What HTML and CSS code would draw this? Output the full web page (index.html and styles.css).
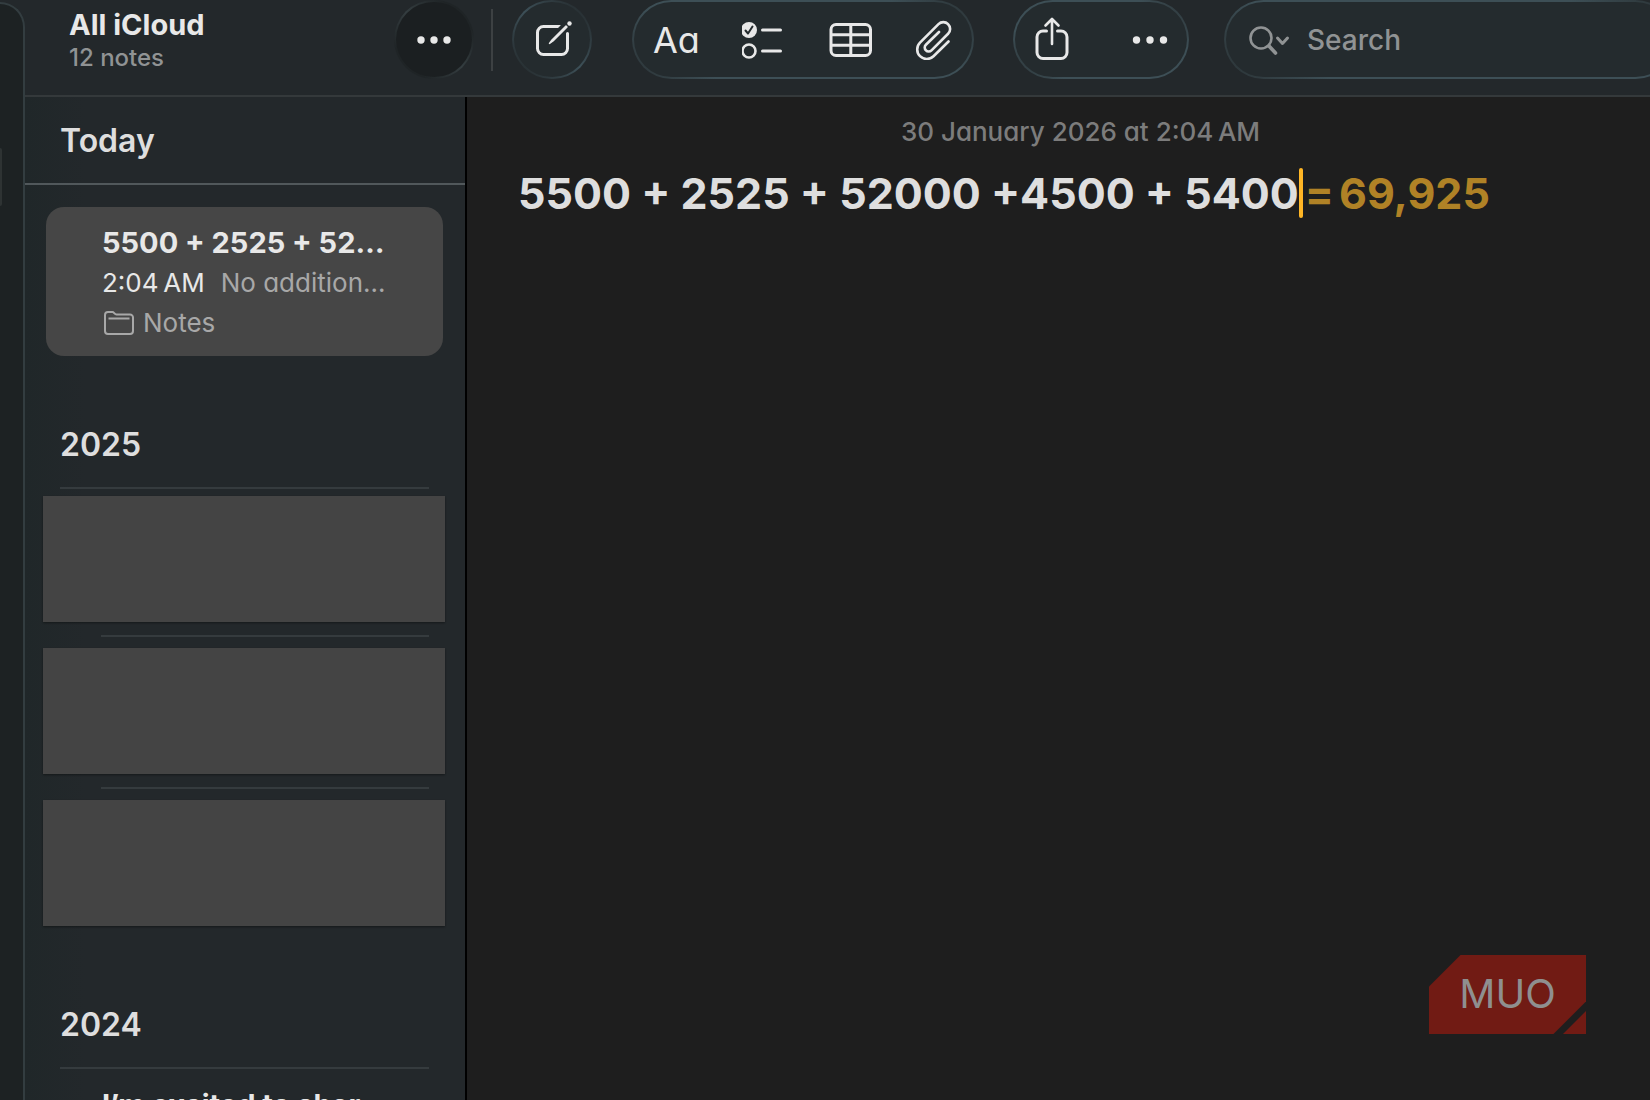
FILE: index.html
```
<!DOCTYPE html>
<html lang="en">
  <head>
    <meta charset="UTF-8" />
    <meta name="viewport" content="width=device-width, initial-scale=1.0" />
    <title>Notes</title>
    <link rel="stylesheet" href="styles.css" />
  </head>
  <body>
    <div class="app">
      <aside class="rail"><div class="rail-item"></div></aside>
      <div class="window">
        <header class="toolbar">
          <div class="folder">
            <div class="folder-name">All iCloud</div>
            <div class="folder-count">12 notes</div>
          </div>
          <button class="round round-dark" aria-label="Folder options">
            <svg width="36" height="36" viewBox="0 0 36 36" fill="currentColor">
              <circle cx="5" cy="18" r="3.7" /><circle cx="18" cy="18" r="3.7" /><circle cx="31" cy="18" r="3.7" />
            </svg>
          </button>
          <div class="separator"></div>
          <button class="round" aria-label="New note">
            <svg width="40" height="40" viewBox="-1 0 40 40" fill="none" stroke="currentColor" stroke-width="3" stroke-linecap="round" stroke-linejoin="round">
              <path d="M27 6.5H10.5a6 6 0 0 0-6 6v16a6 6 0 0 0 6 6h18a6 6 0 0 0 6-6V13.5" />
              <path d="M17.5 20.5 33 5" stroke-width="7" stroke="#242b2e" />
              <path d="M33 6 19 20l-2.5 3.5 3.5-2.5L34 7z" fill="currentColor" stroke-width="1.5" />
              <circle cx="36.5" cy="3.5" r="2.2" fill="currentColor" stroke="none" />
            </svg>
          </button>
          <div class="pill format">
            <button class="type" aria-label="Text style">Aa</button>
            <button aria-label="Checklist">
              <svg width="44" height="40" viewBox="1 0 44 40" fill="none" stroke="currentColor" stroke-width="3" stroke-linecap="round" stroke-linejoin="round">
                <circle cx="8" cy="10" r="8" fill="currentColor" stroke="none" />
                <path d="m4.5 10.5 2.5 3 4.5-7" stroke="#242b2e" stroke-width="2" />
                <circle cx="8" cy="31" r="6.5" stroke-width="2.6" />
                <path d="M21.5 10h18M21.5 31h18" />
              </svg>
            </button>
            <button aria-label="Table">
              <svg width="44" height="40" viewBox="-1 0 44 40" fill="none" stroke="currentColor" stroke-width="3">
                <rect x="2" y="4.5" width="39.5" height="31" rx="5" />
                <path d="M2 14.8h39.5M2 25.2h39.5M21.8 4.5v31" />
              </svg>
            </button>
            <button aria-label="Attach">
              <svg width="40" height="40" viewBox="0 0 40 40" fill="none" stroke="currentColor" stroke-width="2.6" stroke-linecap="round" stroke-linejoin="round">
                <path d="M34.5 21.5 19.5 36.2a9.6 9.6 0 0 1-13.5 0a9.6 9.6 0 0 1 0-13.5L24.5 4.2a6.7 6.7 0 0 1 9.6 0a6.7 6.7 0 0 1 0 9.6L17.5 30.3a3.9 3.9 0 0 1-5.6 0a3.9 3.9 0 0 1 0-5.6L25 12" />
              </svg>
            </button>
          </div>
          <div class="pill share">
            <button aria-label="Share">
              <svg width="40" height="46" viewBox="0 1 40 46" fill="none" stroke="currentColor" stroke-width="3" stroke-linecap="round" stroke-linejoin="round">
                <path d="M14.5 15H11a6 6 0 0 0-6 6v15.5a6 6 0 0 0 6 6h18a6 6 0 0 0 6-6V21a6 6 0 0 0-6-6h-3.5" />
                <path d="M20 28V4M13.5 9.5 20 3l6.5 6.5" stroke-width="2.6" />
              </svg>
            </button>
            <button aria-label="More">
              <svg width="36" height="36" viewBox="0 0 36 36" fill="currentColor">
                <circle cx="4.5" cy="18" r="3.7" /><circle cx="18" cy="18" r="3.7" /><circle cx="31.5" cy="18" r="3.7" />
              </svg>
            </button>
          </div>
          <label class="pill search">
            <svg width="42" height="40" viewBox="0 0 42 40" fill="none" stroke="currentColor" stroke-width="2.6" stroke-linecap="round" stroke-linejoin="round">
              <circle cx="13" cy="18" r="10.5" />
              <path d="m21 26 6.5 7" stroke-width="3.6" />
              <path d="m29.5 18 5 5.5 5-5.5" stroke-width="3" />
            </svg>
            <input type="text" placeholder="Search" aria-label="Search" />
          </label>
        </header>

        <div class="content">
          <section class="list">
            <h2 class="group group-pinned">Today</h2>
            <a class="note selected" href="#">
              <span class="note-title">5500 + 2525 + 52000 +4500 + 5400</span>
              <span class="note-line"><span class="note-time">2:04&#8239;AM</span><span class="note-preview">No additional text</span></span>
              <span class="note-folder">
                <svg width="32" height="26" viewBox="0 0 32 26" fill="none" stroke="currentColor" stroke-width="2" stroke-linejoin="round">
                  <path d="M3 5a3 3 0 0 1 3-3h4.5c1.5 0 2 2.5 4 2.5H28a3 3 0 0 1 3 3V21a3 3 0 0 1-3 3H6a3 3 0 0 1-3-3z" />
                  <path d="M6.5 8.5h21" />
                </svg>
                Notes
              </span>
            </a>

            <h2 class="group">2025</h2>
            <ul class="notes">
              <li class="redacted"></li>
              <li class="redacted"></li>
              <li class="redacted"></li>
            </ul>

            <h2 class="group">2024</h2>
            <a class="note" href="#"><span class="note-title">I’m excited to share this</span></a>
          </section>

          <main class="editor">
            <time class="date">30 January 2026 at 2:04&#8239;AM</time>
            <h1 class="sum">5500 + 2525 + 52000 +4500 + 5400<span class="caret"></span><span class="result"><span>=</span><span>69,925</span></span></h1>
          </main>
        </div>
      </div>
    </div>

    <div class="watermark">
      <svg width="157" height="79" viewBox="0 0 157 79">
        <path d="M31.5 0H157v46.5L124.5 79H0V31.5z" fill="#711b14" />
        <path d="M157 56v23h-23z" fill="#711b14" />
      </svg>
      <span class="watermark-name">MUO</span>
    </div>
  </body>
</html>
```
FILE: styles.css
```
:root {
  --chrome: #23282b;
  --control: #242b2e;
  --page: #1e1e1e;
  --line: #353b3e;
  --text: #dedede;
  --muted: #909394;
  --accent: #b08226;
}

* {
  box-sizing: border-box;
}

body {
  margin: 0;
  height: 100vh;
  overflow: hidden;
  background: var(--chrome);
  color: var(--text);
  font-family: Inter, "Liberation Sans", sans-serif;
}

button {
  padding: 0;
  border: 0;
  background: none;
  color: #e8e8e8;
  font: inherit;
}

svg {
  display: block;
  flex: none;
}

/* the window runs a little past the right side of the screen */
.app {
  display: flex;
  width: calc(100% + 44px);
  height: 100%;
}

.rail {
  flex: none;
  width: 25px;
  margin-top: 2px;
  padding-top: 144px;
  border: solid #333d40;
  border-width: 2px 2px 0 0;
  border-top-right-radius: 36px;
  background: #1d2223;
}
.rail-item {
  width: 2px;
  height: 58px;
  border-radius: 0 4px 4px 0;
  background: #2e3333;
}

.window {
  display: flex;
  flex: 1;
  flex-direction: column;
  min-width: 0;
}

/* toolbar */
.toolbar {
  display: flex;
  flex: none;
  align-items: flex-start;
  height: 97px;
  padding: 0 19px 0 44px;
  border-bottom: 2px solid #34393b;
}
.folder {
  flex: none;
  width: 325px;
  padding-top: 8px;
}
.folder-name {
  color: #e8e8e8;
  font-size: 29px;
  font-weight: 700;
  line-height: 34px;
}
.folder-count {
  color: var(--muted);
  font-size: 24px;
  font-weight: 500;
  line-height: 32px;
}

.round,
.pill {
  display: flex;
  flex: none;
  align-items: center;
  height: 79px;
  border: 2px solid transparent;
  border-radius: 40px;
  background:
    linear-gradient(var(--control), var(--control)) padding-box,
    linear-gradient(45deg, #2a3235, #3d4f56 20%, #3d4f56 80%, #2a3235) border-box;
}
.round {
  justify-content: center;
  width: 80px;
  background:
    linear-gradient(var(--control), var(--control)) padding-box,
    linear-gradient(45deg, #262d30 10%, #3d5058 50%, #262d30 90%) border-box;
}
.round-dark {
  background:
    linear-gradient(#1b1f21, #1b1f21) padding-box,
    linear-gradient(45deg, #1f2426 20%, #343d40 50%, #1f2426 80%) border-box;
}
.separator {
  flex: none;
  width: 2px;
  height: 62px;
  margin: 9px 19px 0 17px;
  background: #3d4143;
}
.format {
  justify-content: space-between;
  width: 342px;
  margin-left: 40px;
  padding: 0 18px 0 19px;
}
.type {
  font-size: 36px;
  line-height: 40px;
  font-feature-settings: "cv11";
}
.share {
  justify-content: space-between;
  width: 176px;
  margin-left: 39px;
  padding: 0 19px 0 17px;
}
.search {
  flex: 1;
  gap: 17px;
  min-width: 0;
  margin-left: 35px;
  padding-left: 22px;
  color: var(--muted);
}
.search input {
  flex: 1;
  min-width: 0;
  padding: 0;
  border: 0;
  outline: 0;
  background: none;
  color: var(--text);
  font: 500 28px Inter, sans-serif;
}
.search input::placeholder {
  color: var(--muted);
  opacity: 1;
}

.content {
  display: flex;
  flex: 1;
  min-height: 0;
}

/* note list */
.list {
  flex: none;
  width: 442px;
  overflow: hidden;
  border-right: 2px solid #000;
  background: linear-gradient(90deg, #202729, var(--chrome) 60px);
}
.group {
  margin: 65px 36px 0 35px;
  padding: 2px 0 20px;
  border-bottom: 2px solid var(--line);
  font-size: 32px;
  font-weight: 600;
  line-height: 44px;
}
.group-pinned {
  margin: 0;
  padding: 22px 35px 20px;
  border-color: #51585b;
}
.note {
  display: block;
  margin: 0 22px 0 21px;
  padding: 17px 52px 14px 56px;
  color: inherit;
  text-decoration: none;
  white-space: nowrap;
}
.selected {
  margin-top: 22px;
  border-radius: 18px;
  background: #464646;
}
.note-title {
  display: block;
  overflow: hidden;
  color: #e8e8e8;
  font-size: 29px;
  font-weight: 700;
  line-height: 38px;
  text-overflow: ellipsis;
}
.note-line {
  display: flex;
  gap: 16px;
  font-size: 26px;
  line-height: 42px;
  font-feature-settings: "cv11";
}
.note-time {
  color: #e8e8e8;
}
.note-preview {
  overflow: hidden;
  color: #a8a8a8;
  text-overflow: ellipsis;
}
.note-folder {
  display: flex;
  align-items: center;
  gap: 9px;
  color: #a8a8a8;
  font-size: 26px;
  line-height: 38px;
}

.notes {
  display: flex;
  flex-direction: column;
  gap: 26px;
  margin: 7px 20px 0 18px;
  padding: 0 0 10px;
  list-style: none;
}
.redacted {
  position: relative;
  height: 126px;
  background: #444;
  box-shadow: 0 1px 2px rgba(0, 0, 0, 0.4);
}
/* divider between two notes, inset to the title */
.redacted + .redacted::before {
  content: "";
  position: absolute;
  top: -13px;
  right: 16px;
  left: 58px;
  height: 2px;
  background: var(--line);
}

/* editor */
.editor {
  flex: 1;
  min-width: 0;
  background: var(--page);
}
.date {
  display: block;
  padding-top: 18px;
  color: #7c7c7c;
  font-size: 26px;
  font-weight: 500;
  line-height: 34px;
  text-align: center;
  font-feature-settings: "cv11";
}
.sum {
  display: flex;
  align-items: center;
  margin: 16px 0 0 51px;
  font-size: 43px;
  font-weight: 700;
  line-height: 56px;
  white-space: nowrap;
}
.caret {
  width: 4px;
  height: 50px;
  border-radius: 2px;
  background: #ffb625;
}
.result {
  display: flex;
  gap: 5px;
  margin-left: 2px;
  color: var(--accent);
}

/* badge over the lower right corner */
.watermark {
  position: absolute;
  right: 64px;
  bottom: 66px;
}
.watermark-name {
  position: absolute;
  inset: 0;
  color: #8f8f8f;
  font-size: 40px;
  line-height: 78px;
  text-align: center;
}
```
